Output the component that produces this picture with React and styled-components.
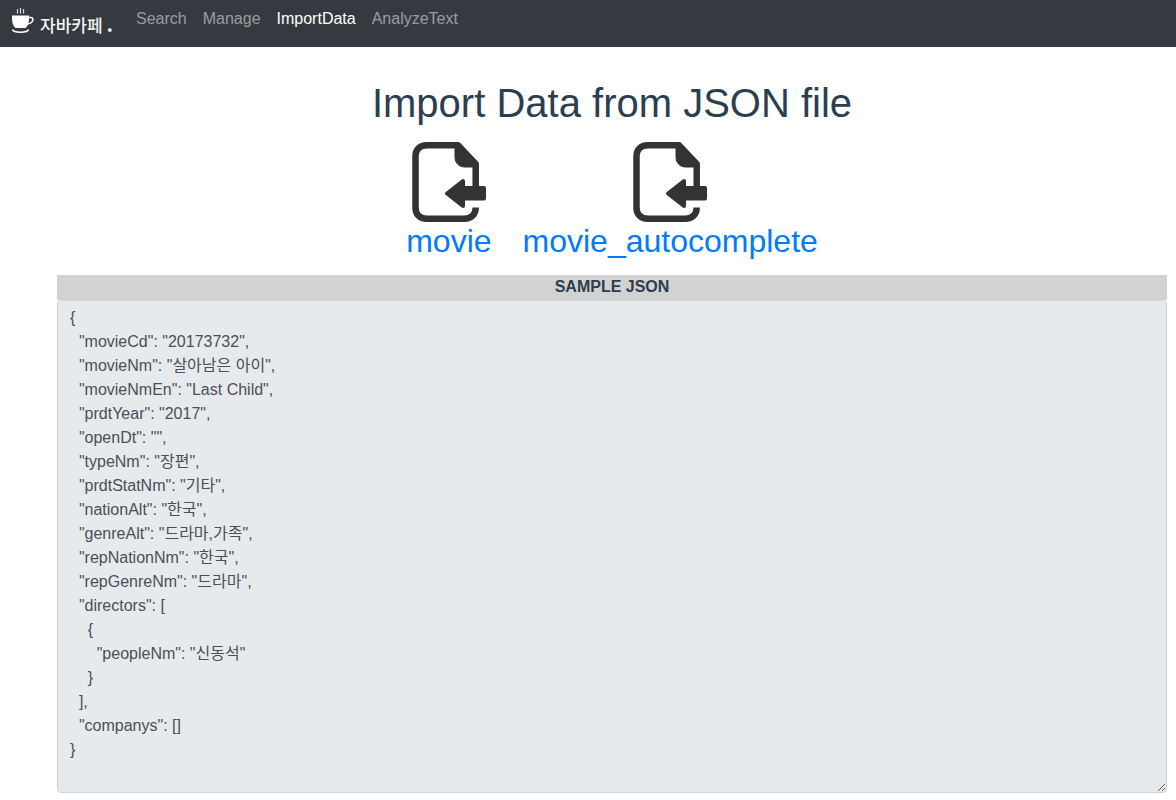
import React from "react";
import styled, { createGlobalStyle } from "styled-components";

const sample = `{
  "movieCd": "20173732",
  "movieNm": "살아남은 아이",
  "movieNmEn": "Last Child",
  "prdtYear": "2017",
  "openDt": "",
  "typeNm": "장편",
  "prdtStatNm": "기타",
  "nationAlt": "한국",
  "genreAlt": "드라마,가족",
  "repNationNm": "한국",
  "repGenreNm": "드라마",
  "directors": [
    {
      "peopleNm": "신동석"
    }
  ],
  "companys": []
}`;

const GlobalStyle = createGlobalStyle`
  html, body {
    margin: 0;
    background: #fff;
    overflow: hidden;
  }
  body {
    font-family: "Liberation Sans", "Noto Sans CJK KR", sans-serif;
    font-size: 16px;
    color: #2c3e50;
  }
`;

const Navbar = styled.nav`
  height: 47px;
  background-color: #343a40;
  display: flex;
  align-items: flex-start;
  padding-left: 11px;
`;

const Brand = styled.a`
  display: flex;
  align-items: flex-start;
  box-sizing: border-box;
  height: 47px;
  width: 117px;
  padding-top: 8px;
  color: #f4f4f4;
  white-space: nowrap;
`;

const BrandText = styled.span`
  margin-left: 5px;
  margin-top: 5px;
  font-family: "Noto Sans CJK KR", sans-serif;
  font-size: 17px;
  font-weight: 500;
  line-height: 24px;
`;

const BrandDot = styled.span`
  margin-left: 4px;
  font-size: 20px;
  font-weight: 700;
  line-height: 20px;
`;

const NavLink = styled.a`
  padding: 7px 8px;
  line-height: 24px;
  color: ${(p) => (p.$active ? "#fff" : "rgba(255, 255, 255, 0.5)")};
`;

const Page = styled.main`
  width: 1110px;
  margin-left: 57px;
  display: flex;
  flex-direction: column;
`;

const Title = styled.h1`
  margin: 32px 0 15px;
  font-size: 40px;
  font-weight: 400;
  line-height: 48px;
  text-align: center;
  color: #2c3e50;
`;

const Files = styled.div`
  display: flex;
  justify-content: center;
  gap: 31px;
`;

const FileLink = styled.a`
  display: flex;
  flex-direction: column;
  align-items: center;
  color: #007bff;
  font-size: 32px;
  line-height: 38px;
`;

const Heading = styled.div`
  margin-top: 15px;
  height: 25px;
  line-height: 24px;
  background: #d3d2d2;
  font-weight: 700;
  text-align: center;
  color: #2c3e50;
`;

const Sample = styled.textarea`
  display: block;
  box-sizing: border-box;
  width: 100%;
  height: 493px;
  padding: 5px 12px 6px;
  border: 1px solid #ced4da;
  border-radius: 4px;
  background: #e7eaec;
  color: #495057;
  font: inherit;
  line-height: 24px;
  outline: none;
`;

const CoffeeLogo = () => (
  <svg width="24" height="26" viewBox="0 0 24 26" fill="none">
    <path d="M6.500 1v4.500M9.500 0v5.500M12.500 1v4.500" stroke="#d8d8d8" strokeWidth="1.200" />
    <path d="M1 7.500h17v3c0 5-1.500 8-3.500 9.500h-10C2.500 18.500 1 15.500 1 10.500z" fill="#fff" />
    <path d="M18 9.500h2c3 0 3 5.500-3.500 6.500" stroke="#fff" strokeWidth="1.500" />
    <path d="M1.500 21.500c1 3.500 15 3.500 16 0" stroke="#fff" strokeWidth="1.500" />
  </svg>
);

const FileImportIcon = () => (
  <svg width="74" height="80" viewBox="0 0 74 80" fill="none">
    <path
      d="M63.700 44V22L46 3.300H15C7.500 3.300 3.500 7.500 3.500 14.500v51C3.500 72.500 7.500 76.700 15 76.700h37c7.500 0 11.700-4.200 11.700-11.200"
      stroke="#333"
      strokeWidth="6.500"
      strokeLinejoin="round"
    />
    <path d="M43 2h4l19 20v3H53c-6 0-10-4-10-10z" fill="#333" stroke="#333" strokeWidth="1" strokeLinejoin="round" />
    <path
      d="M35 51.500L51 39v7h21v10.500H51V64z"
      fill="#333"
      stroke="#333"
      strokeWidth="4"
      strokeLinejoin="round"
    />
  </svg>
);

export default function App() {
  return (
    <>
      <GlobalStyle />
      <Navbar>
        <Brand>
          <CoffeeLogo />
          <BrandText>
            자바카페<BrandDot>.</BrandDot>
          </BrandText>
        </Brand>
        <NavLink>Search</NavLink>
        <NavLink>Manage</NavLink>
        <NavLink $active>ImportData</NavLink>
        <NavLink>AnalyzeText</NavLink>
      </Navbar>
      <Page>
        <Title>Import Data from JSON file</Title>
        <Files>
          <FileLink>
            <FileImportIcon />
            movie
          </FileLink>
          <FileLink>
            <FileImportIcon />
            movie_autocomplete
          </FileLink>
        </Files>
        <Heading>SAMPLE JSON</Heading>
        <Sample readOnly value={sample} />
      </Page>
    </>
  );
}
